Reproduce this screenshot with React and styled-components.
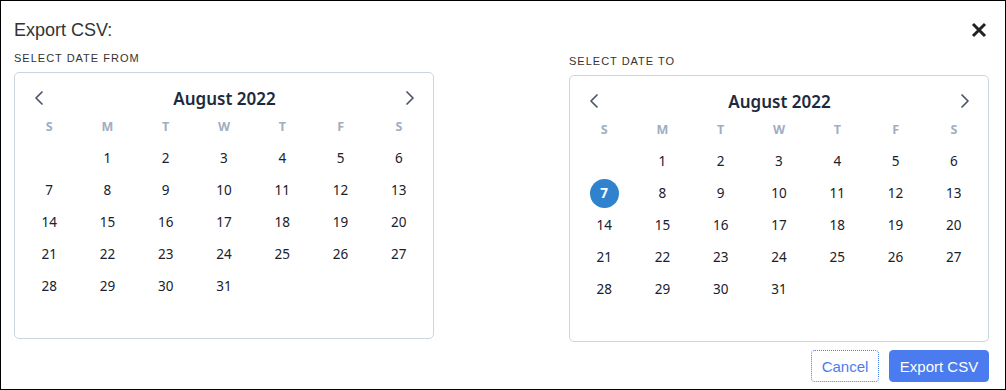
import React from "react";
import styled, { createGlobalStyle } from "styled-components";
import { ChevronLeft, ChevronRight } from "lucide-react";

const Global = createGlobalStyle`
  html, body { margin: 0; padding: 0; background: #fff; }
  * { box-sizing: border-box; }
`;

const Dialog = styled.div`
  width: 1006px;
  height: 390px;
  border: 1px solid #000;
  background: #fff;
  padding: 17px 16px 0 13px;
  font-family: "Liberation Sans", Arial, sans-serif;
  color: #333;
  display: flex;
  flex-direction: column;
`;

const TitleBar = styled.div`
  display: flex;
  justify-content: space-between;
  align-items: center;
  height: 24px;
`;

const Title = styled.h2`
  margin: 0;
  font-size: 18px;
  font-weight: 400;
  color: #333;
`;

const CloseButton = styled.button`
  border: none;
  background: none;
  padding: 0;
  width: 20px;
  height: 20px;
  display: flex;
  align-items: center;
  justify-content: center;
  cursor: pointer;
`;

const Columns = styled.div`
  display: flex;
  justify-content: space-between;
  margin-top: 9px;
`;

const Column = styled.div`
  width: 420px;
  display: flex;
  flex-direction: column;
  padding-top: ${(p) => p.$offset || 0}px;
`;

const Label = styled.div`
  font-size: 11px;
  letter-spacing: 1px;
  color: #333;
  height: 14px;
  line-height: 14px;
  margin-bottom: 7px;
`;

const Calendar = styled.div`
  border: 1px solid #cbd5e0;
  border-radius: 5px;
  height: 267px;
  padding: 9px 5px 0 5px;
  font-family: "Noto Sans", "Open Sans", sans-serif;
`;

const Header = styled.div`
  display: flex;
  align-items: center;
  justify-content: space-between;
  height: 32px;
  padding: 0 6px 0 7px;
`;

const NavButton = styled.button`
  border: none;
  background: none;
  padding: 0;
  display: flex;
  color: #4a5568;
  cursor: pointer;
`;

const Month = styled.div`
  font-size: 17px;
  font-weight: 600;
  color: #1e2a3b;
`;

const Grid = styled.div`
  display: grid;
  grid-template-columns: repeat(7, 1fr);
`;

const DayName = styled.div`
  height: 24px;
  display: flex;
  align-items: center;
  justify-content: center;
  font-size: 12.5px;
  font-weight: 700;
  color: #a0aec0;
  margin-bottom: 4px;
`;

const DayCell = styled.div`
  height: 32px;
  display: flex;
  align-items: center;
  justify-content: center;
`;

const DayNum = styled.span`
  width: 29px;
  height: 29px;
  border-radius: 50%;
  display: flex;
  align-items: center;
  justify-content: center;
  font-size: 13.5px;
  font-weight: ${(p) => (p.$selected ? 700 : 400)};
  color: ${(p) => (p.$selected ? "#fff" : "#1a202c")};
  background: ${(p) => (p.$selected ? "#3182ce" : "transparent")};
`;

const Footer = styled.div`
  display: flex;
  justify-content: flex-end;
  gap: 10px;
  margin-top: 8px;
`;

const Button = styled.button`
  height: 32px;
  border-radius: 4px;
  font-family: "Liberation Sans", Arial, sans-serif;
  font-size: 15px;
  padding: 0;
  white-space: nowrap;
  cursor: pointer;
  border: ${(p) => (p.$primary ? "1px solid #4a7cf0" : "1px dotted #4a7cf0")};
  background: ${(p) => (p.$primary ? "#4a7cf0" : "#fff")};
  color: ${(p) => (p.$primary ? "#fff" : "#4a7cf0")};
  width: ${(p) => (p.$primary ? 100 : 68)}px;
`;

const DOW = ["S", "M", "T", "W", "T", "F", "S"];

function MonthCalendar({ selected }) {
  const cells = [];
  cells.push(null);
  for (let d = 1; d <= 31; d++) cells.push(d);
  return (
    <Calendar>
      <Header>
        <NavButton aria-label="Previous month">
          <ChevronLeft size={24} strokeWidth={1.7} />
        </NavButton>
        <Month>August 2022</Month>
        <NavButton aria-label="Next month">
          <ChevronRight size={24} strokeWidth={1.7} />
        </NavButton>
      </Header>
      <Grid>
        {DOW.map((d, i) => (
          <DayName key={i}>{d}</DayName>
        ))}
        {cells.map((d, i) => (
          <DayCell key={i}>
            {d && <DayNum $selected={d === selected}>{d}</DayNum>}
          </DayCell>
        ))}
      </Grid>
    </Calendar>
  );
}

export default function App() {
  return (
    <>
      <Global />
      <Dialog>
        <TitleBar>
          <Title>Export CSV:</Title>
          <CloseButton aria-label="Close">
            <svg width="16" height="16" viewBox="0 0 16 16">
              <path d="M2 2 L14 14 M14 2 L2 14" stroke="#222" strokeWidth="3" strokeLinecap="butt" />
            </svg>
          </CloseButton>
        </TitleBar>
        <Columns>
          <Column>
            <Label>SELECT DATE FROM</Label>
            <MonthCalendar />
          </Column>
          <Column $offset={3}>
            <Label>SELECT DATE TO</Label>
            <MonthCalendar selected={7} />
          </Column>
        </Columns>
        <Footer>
          <Button>Cancel</Button>
          <Button $primary>Export CSV</Button>
        </Footer>
      </Dialog>
    </>
  );
}
